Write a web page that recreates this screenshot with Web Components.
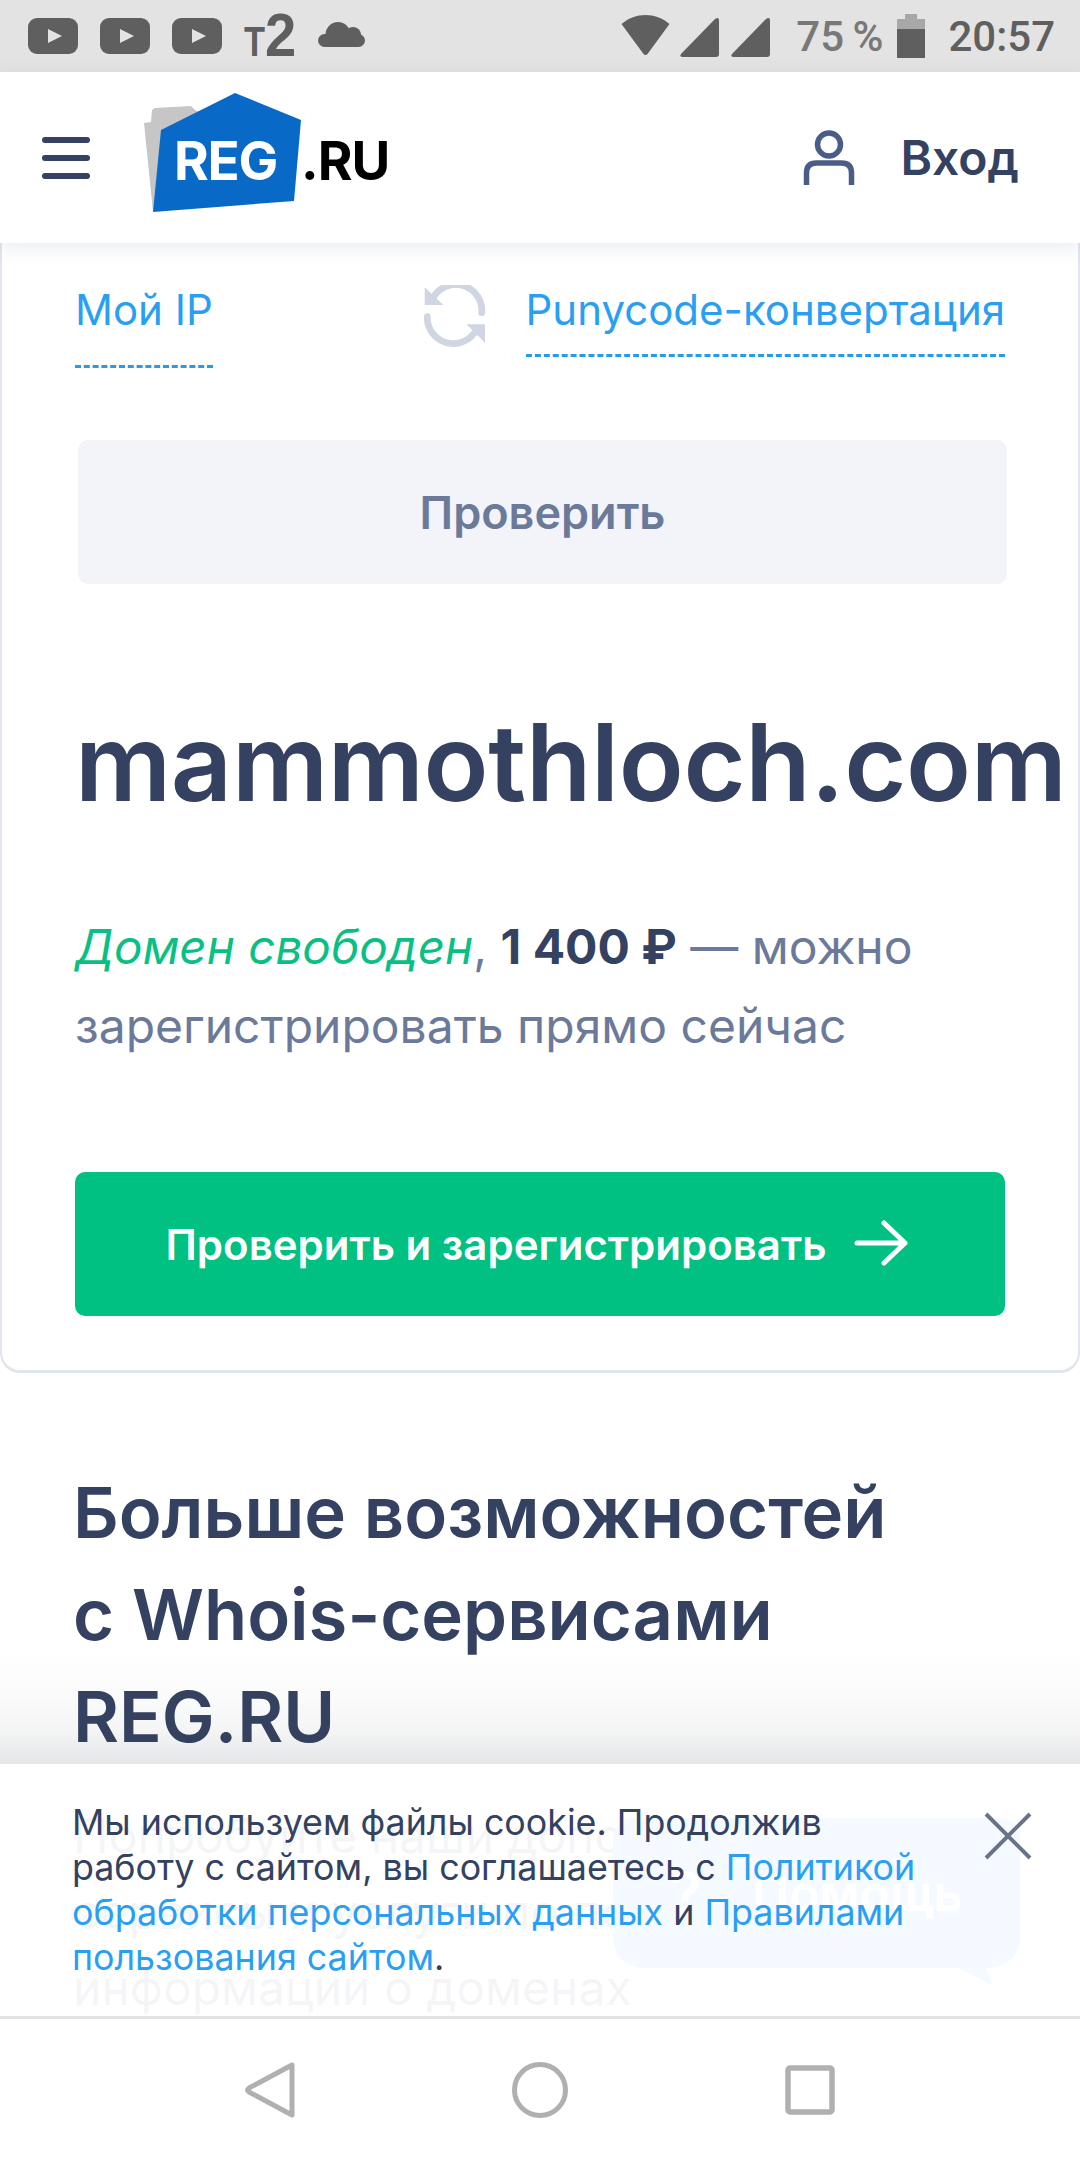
<!DOCTYPE html>
<html lang="ru"><head><meta charset="utf-8"><title>Whois</title>
<style>
html,body{margin:0;padding:0;background:#fff}
body{width:1080px;height:2160px;overflow:hidden;font-family:Inter,"Noto Sans",sans-serif;color:#344160}
phone-frame{height:2160px}
</style></head><body>
<phone-frame>
  <status-bar slot="status"></status-bar>
  <site-header slot="header"></site-header>
  <whois-card>
    <h-link slot="left" gap="27">Мой IP</h-link>
    <h-link slot="right" gap="16">Punycode-конвертация</h-link>
    <ui-button slot="check" kind="muted">Проверить</ui-button>
    <span slot="domain">mammothloch.com</span>
    <span slot="free">Домен свободен</span>
    <span slot="price">1 400 ₽</span>
    <ui-button slot="register" kind="green" arrow>Проверить и зарегистрировать</ui-button>
  </whois-card>
  <promo-section></promo-section>
  <help-bubble slot="overlay"></help-bubble>
  <cookie-notice slot="overlay"></cookie-notice>
  <nav-bar slot="nav"></nav-bar>
</phone-frame>
<script>
function def(name, css, html, init){
  customElements.define(name, class extends HTMLElement{
    constructor(){super();const r=this.attachShadow({mode:'open'});r.innerHTML='<style>'+css+'</style>'+html;if(init)init(this,r);}
  });
}
def('phone-frame',`:host{display:flex;flex-direction:column;width:1080px;height:2160px;overflow:hidden;position:relative;background:#fff}
.main{flex:1;min-height:0;position:relative;overflow:hidden}`,
`<slot name="status"></slot><slot name="header"></slot><div class="main"><slot></slot><slot name="overlay"></slot></div><slot name="nav"></slot>`);

def('status-bar',`:host{display:flex;align-items:center;height:72px;background:#e3e3e3;flex:none;position:relative;font-family:Roboto,sans-serif;color:#5f5f5f}
.left{display:flex;align-items:center;align-self:stretch;padding-left:28px}
.yt{width:50px;height:36px;margin-right:22px;display:block}
.t2{display:flex;align-items:baseline;align-self:flex-start;margin-top:5px;width:51px;margin-right:23px;font-family:"Liberation Sans",sans-serif;font-weight:700;line-height:1;color:#5f5f5f}
.t2 i{font-style:normal;font-size:43px;line-height:43px;font-weight:700;display:inline-block;width:21px;transform:scaleX(.8);transform-origin:0 50%}
.t2 b{font-size:61px;line-height:61px;font-weight:700;display:inline-block;transform:scaleX(.92);transform-origin:0 50%}
.right{margin-left:auto;display:flex;align-items:center;padding-right:25px}
.pct{font-size:42px;font-weight:500;color:#787878;margin:0 14px 0 25px;white-space:nowrap;word-spacing:-2px}
.time{font-size:42px;font-weight:500;color:#5f5f5f;margin-left:23px}
svg{display:block}`,
`<div class="left">
${[1,2,3].map(()=>`<svg class="yt" viewBox="0 0 50 36"><rect width="50" height="36" rx="9" fill="#5f5f5f"/><path d="M20 11l14 7-14 7z" fill="#e3e3e3"/></svg>`).join('')}
<div class="t2"><i>Т</i><b>2</b></div>
<svg width="47" height="25" viewBox="0 0 47 25" style="margin-top:-3px"><g fill="#5f5f5f"><circle cx="20" cy="12.500" r="12.500"/><circle cx="35" cy="13" r="8"/><rect y="12" width="47" height="13" rx="6.500"/></g></svg>
</div>
<div class="right">
<svg width="51" height="42" viewBox="0 0 50 42" style="margin:-3px 9px 0 0"><path d="M1 10C15-2 35-2 49 10L27 40q-2 2-4 0z" fill="#5f5f5f"/></svg>
<svg width="40" height="41" viewBox="0 0 40 41" style="margin:2px 11px 0 0"><path d="M1 37L35 2q4-3 4 2v33q0 3-3 3H3q-4 0-2-3z" fill="#5f5f5f"/></svg>
<svg width="40" height="41" viewBox="0 0 40 41" style="margin-top:2px"><path d="M1 37L35 2q4-3 4 2v33q0 3-3 3H3q-4 0-2-3z" fill="#5f5f5f"/></svg>
<span class="pct">75 %</span>
<svg width="28" height="44" viewBox="0 0 28 44"><path d="M0 5h8V0h12v5h8v10H0z" fill="#a8a8a8"/><path d="M0 15h28v29H0z" fill="#5f5f5f"/></svg>
<span class="time">20:57</span>
</div>`);

def('site-header',`:host{display:flex;align-items:center;height:171px;background:#fff;flex:none;position:relative;z-index:2;box-shadow:0 4px 18px rgba(70,90,150,.13)}
.burger{display:flex;flex-direction:column;gap:12px;margin-left:42px;width:48px;margin-top:1px}
.burger i{display:block;height:6px;border-radius:3px;background:#344160}
.logo{position:relative;width:250px;height:120px;margin-left:54px;flex:none;align-self:flex-start;margin-top:21px}
.logo svg{position:absolute;left:0;top:0}
.reg{position:absolute;left:30px;top:36px;font-weight:700;font-size:53px;line-height:64px;color:#fff;letter-spacing:-1.2px}
.ru{position:absolute;left:157px;top:36px;font-weight:700;font-size:53px;line-height:64px;color:#000;letter-spacing:-1px}
.user{margin-left:auto;display:flex;align-items:center;margin-right:61px}
.user span{font-weight:600;font-size:48px;color:#344160;margin-left:45px;line-height:56px}
svg{display:block}`,
`<div class="burger"><i></i><i></i><i></i></div>
<div class="logo">
<svg width="160" height="120" viewBox="0 0 160 120"><path d="M0 30l7-1 1-12 3-2 36-2 4 4L70 25 9 119z" fill="#c6c6c6"/><path d="M91 0l66 27-7 81-141 11 8-82z" fill="#0869c7"/></svg>
<span class="reg">REG</span><span class="ru">.RU</span>
</div>
<div class="user">
<svg width="52" height="56" viewBox="0 0 52 56"><circle cx="26" cy="14.500" r="11.500" fill="none" stroke="#4a5d87" stroke-width="5.500"/><path d="M3.500 55V43q0-10 10-10h25q10 0 10 10v12" fill="none" stroke="#4a5d87" stroke-width="5.500"/></svg>
<span>Вход</span></div>`);

def('h-link',`:host{display:block;font-size:42px;line-height:56px;color:#2a9ff2;white-space:nowrap}
span{display:block;border-bottom:3px dashed #2a9ae8}`,
`<span><slot></slot></span>`,(h,r)=>{const g=h.getAttribute('gap');r.querySelector('span').style.paddingBottom=g+'px';});

def('ui-button',`:host{display:block;height:144px;border-radius:10px;font-weight:600}
.in{display:flex;align-items:center;justify-content:center;height:100%;gap:28px}
:host([kind=muted]){background:#f2f4f9;color:#6b7a99;margin:0 0 0 3px;width:929px;font-size:45px}
:host([kind=green]){background:#00c082;color:#fff;font-size:42px}
svg{display:none}:host([arrow]) svg{display:block;margin-top:-2px;margin-right:6px}`,
`<div class="in"><slot></slot><svg width="54" height="46" viewBox="0 0 54 46"><path d="M3 23h48M30 3l21 20-21 20" fill="none" stroke="#fff" stroke-width="5" stroke-linecap="round" stroke-linejoin="round"/></svg></div>`);

def('whois-card',`:host{display:block;box-sizing:border-box;height:1130px;border:solid #e1e5ee;border-width:0 2px 3px;border-radius:0 0 20px 20px;padding:39px 73px 0;background:#fff}
.row{display:flex;justify-content:space-between;align-items:flex-start;margin-bottom:71px;height:87px}
.rt{display:flex;align-items:flex-start}
.rt svg{display:block;margin:3px 40px 0 0}
.dom{font-weight:600;font-size:106.800px;line-height:126px;margin:116px 0 0;white-space:nowrap;color:#344160;letter-spacing:-.3px}
p{margin:81px 0 0;font-size:48px;line-height:79px;color:#6b7a99}
em{color:#0abf83;font-style:italic;font-size:47.600px}b{color:#344160;font-weight:700}
.reg{display:block;margin-top:107px}`,
`<div class="row"><slot name="left"></slot><div class="rt"><svg width="62" height="62" viewBox="0 0 62 62"><g fill="none" stroke="#cfd6e1" stroke-width="6.700" stroke-linecap="round"><path d="M9 13A26 26 0 0 1 57.700 27.700"/><path d="M3.300 31.700A26 26 0 0 0 50 48.300"/></g><path d="M.7 2.300L19.300 20H.7zM61 39.300H42.300L61 57.700z" fill="#cfd6e1"/></svg><slot name="right"></slot></div></div>
<slot name="check"></slot>
<div class="dom"><slot name="domain"></slot></div>
<p><em><slot name="free"></slot></em>, <b><slot name="price"></slot></b> — можно<br>зарегистрировать прямо сейчас</p>
<div class="reg"><slot name="register"></slot></div>`);

def('promo-section',`:host{display:block;padding:89px 73px 0}
h2{margin:0;font-size:70.600px;line-height:102px;font-weight:600;color:#344160}
p{margin:30px 0 0;font-size:48px;line-height:76px;color:#344160;white-space:nowrap}`,
`<h2>Больше возможностей<br>с Whois-сервисами<br>REG.RU</h2><p>Попробуйте наши дополнительные<br>сервисы и услуги по поиску<br>информации о доменах</p>`);

def('help-bubble',`:host{position:absolute;left:613px;top:1575px;width:407px;height:150px;background:#2a9ff2;border-radius:20px 20px 30px 30px;color:#fff;font-weight:600;font-size:50px;display:flex;align-items:center;justify-content:center;gap:50px;z-index:3}
.q{font-size:58px}
:host::after{content:"";position:absolute;left:345px;top:150px;width:34px;height:17px;background:#2a9ff2;clip-path:polygon(0 0,28px 0,34px 100%)}`,`<span class="q">?</span><span>Помощь</span>`);

def('cookie-notice',`:host{position:absolute;left:0;right:0;bottom:0;height:252px;background:rgba(255,255,255,.95);z-index:4;box-sizing:border-box;padding:36px 0 0 72px;font-size:35.800px;line-height:45px;color:#344160}
:host::before{content:"";position:absolute;left:0;right:0;top:-115px;height:115px;background:linear-gradient(to bottom,rgba(50,60,70,0),rgba(50,60,70,.02) 40%,rgba(50,60,70,.05) 70%,rgba(50,60,70,.13));pointer-events:none}
a{color:#2a9ff2;text-decoration:none}
svg{position:absolute;left:984px;top:48px;display:block}
div{white-space:nowrap}`,
`<div>Мы используем файлы cookie. Продолжив<br>работу с сайтом, вы соглашаетесь с <a>Политикой</a><br><a>обработки персональных данных</a> и <a>Правилами</a><br><a>пользования сайтом</a>.</div>
<svg width="48" height="48" viewBox="0 0 48 48"><path d="M2 2l44 44M46 2L2 46" stroke="#6a7488" stroke-width="4" fill="none"/></svg>`);

def('nav-bar',`:host{display:flex;align-items:center;justify-content:center;height:141px;flex:none;background:#fff;border-top:3px solid #e3e3e1;position:relative;z-index:5}
svg{display:block}
.b{width:270px;display:flex;justify-content:center}`,
`<div class="b"><svg width="50" height="56" viewBox="0 0 50 56"><path d="M47 3L4 26q-3 2 0 4l43 23z" fill="none" stroke="#b0b0b0" stroke-width="5" stroke-linejoin="round"/></svg></div>
<div class="b"><svg width="56" height="56" viewBox="0 0 56 56"><circle cx="28" cy="28" r="25.500" fill="none" stroke="#b0b0b0" stroke-width="5"/></svg></div>
<div class="b"><svg width="50" height="50" viewBox="0 0 50 50"><rect x="3" y="3" width="44" height="44" rx="2" fill="none" stroke="#b0b0b0" stroke-width="5.500"/></svg></div>`);
</script>
</body></html>
